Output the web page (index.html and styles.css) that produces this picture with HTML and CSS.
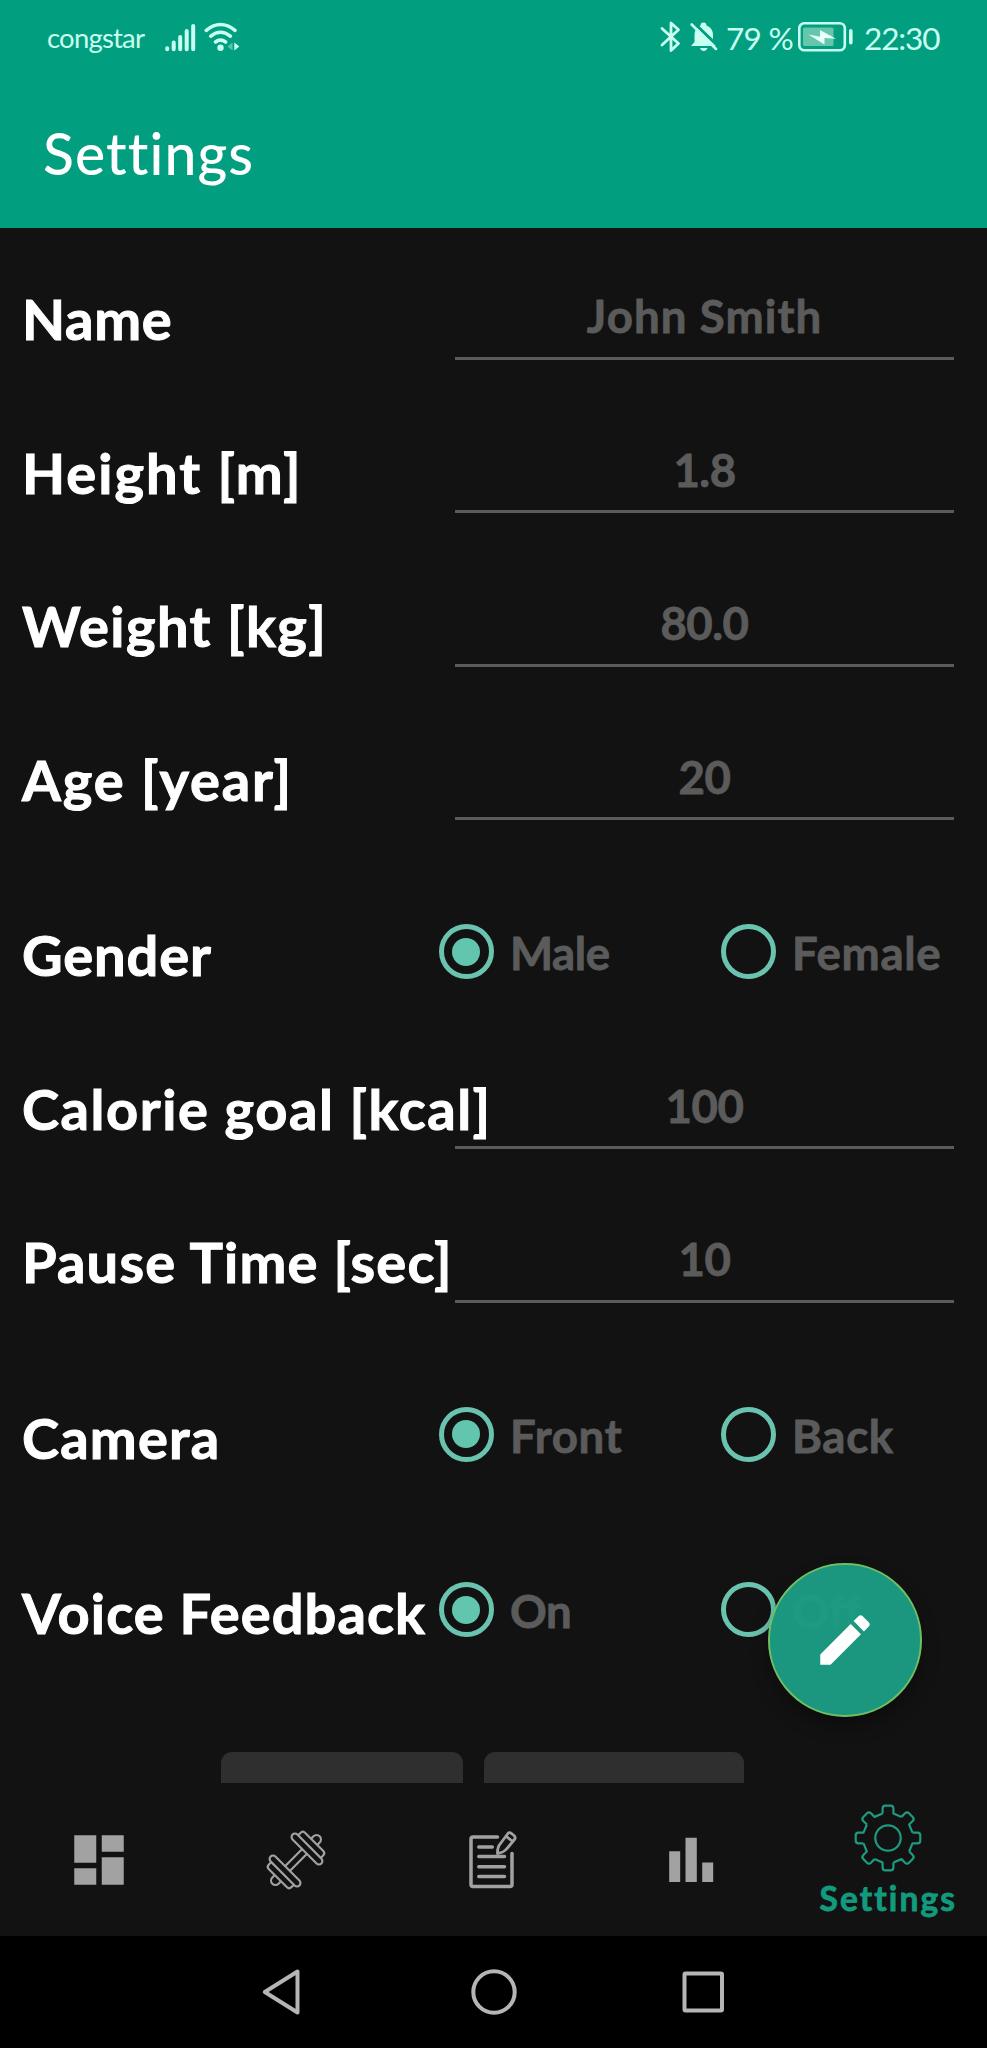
FILE: index.html
```html
<!DOCTYPE html>
<html lang="en">
<head>
<meta charset="utf-8">
<title>Settings</title>
<link rel="stylesheet" href="styles.css">
</head>
<body>
<div class="screen">
  <header class="header">
    <div class="status">
      <span class="carrier">congstar</span>
      <svg class="signal" width="31" height="29" viewBox="0 0 31 29" stroke="#c9fff0" stroke-width="4" stroke-linecap="round"><path d="M2.2 25.2v1M8.7 19.5v6.700M15.200 14v12.200M21.700 8v18.200M28.200 3v23.200"/></svg>
      <svg class="wifi" width="36" height="30" viewBox="0 0 36 30" fill="none" stroke="#c9fff0" stroke-width="3.600" stroke-linecap="round"><path d="M2.300 8.300Q16.500-3.300 31 8.300M6.800 14.200Q16.500 6.300 26.300 14.200M11.500 20Q16.500 16.300 21.600 20"/><circle cx="16.500" cy="25.700" r="3.200" fill="#c9fff0" stroke="none"/><path d="M28.500 20.500v8l-5-4z" fill="#5cc5a9" stroke="none"/><path d="M30.300 20.500v8l5-4z" fill="#c9fff0" stroke="none"/></svg>
      <span class="grow"></span>
      <svg class="bt" width="22" height="32" viewBox="0 0 22 32" fill="none" stroke="#c9fff0" stroke-width="2.800" stroke-linejoin="round" stroke-linecap="round"><path d="M2 7.500L18.500 22.500L11 29.500V2L18.500 8.700L2 24"/></svg>
      <svg class="bell" width="28" height="30" viewBox="0 0 28 30"><path d="M1 24L4.500 20V13Q4.500 6 10.500 3.500Q10.500.500 13.500.500Q16.500.500 16.500 3.500Q23 6 23 13V20L26 24Z" fill="#c9fff0"/><path d="M10 26h7.500q-1 3-3.700 3t-3.800-3z" fill="#c9fff0"/><path d="M3.500.5L28 24" stroke="#029e80" stroke-width="3"/><path d="M1.700 2.500L26 27" stroke="#c9fff0" stroke-width="2.600" stroke-linecap="round"/></svg>
      <span class="percent">79 %</span>
      <svg class="battery" width="56" height="30" viewBox="0 0 56 30"><rect x="1.300" y="1.300" width="45.500" height="27" rx="5" fill="none" stroke="#c9fff0" stroke-width="2.600"/><rect x="5" y="5.500" width="30.500" height="18.500" rx="1.500" fill="#66c6ac"/><path d="M10.500 12.500L22 14.800V8L38 16.800L26.500 16V22.500Z" fill="#e9fffa"/><rect x="51" y="7" width="3.600" height="15.500" rx="1.800" fill="#c9fff0"/></svg>
      <span class="clock">22:30</span>
    </div>
    <h1 class="title">Settings</h1>
  </header>

  <main class="form">
    <div class="row first"><span class="label name">Name</span><div class="field wide-text">John Smith</div></div>
    <div class="row"><span class="label height">Height [m]</span><div class="field">1.8</div></div>
    <div class="row"><span class="label weight">Weight [kg]</span><div class="field">80.0</div></div>
    <div class="row"><span class="label age">Age [year]</span><div class="field">20</div></div>
    <div class="row tall"><span class="label gender">Gender</span><div class="options"><div class="option"><i class="radio on"></i><span class="snug">Male</span></div><div class="option"><i class="radio"></i><span>Female</span></div></div></div>
    <div class="row"><span class="label calorie">Calorie goal [kcal]</span><div class="field">100</div></div>
    <div class="row"><span class="label pause">Pause Time [sec]</span><div class="field">10</div></div>
    <div class="row tall"><span class="label camera">Camera</span><div class="options"><div class="option"><i class="radio on"></i><span>Front</span></div><div class="option"><i class="radio"></i><span>Back</span></div></div></div>
    <div class="row tall"><span class="label voice">Voice Feedback</span><div class="options"><div class="option"><i class="radio on"></i><span class="snug">On</span></div><div class="option"><i class="radio"></i><span class="snug">Off</span></div></div></div>
    <div class="buttons"><div class="button save"></div><div class="button cancel"></div></div>
    <div class="fab"><svg width="66" height="66" viewBox="0 0 24 24" fill="#fff"><path d="M3 17.250V21h3.750L17.810 9.940l-3.750-3.750L3 17.250zM20.710 7.040c.390-.390.390-1.020 0-1.410l-2.340-2.340c-.390-.390-1.020-.390-1.410 0l-1.830 1.830 3.750 3.750 1.830-1.830z"/></svg></div>
  </main>

  <nav class="tabs">
    <div class="tab"><svg width="66" height="66" viewBox="0 0 24 24" fill="#a2a2a2"><path d="M3 13h8V3H3v10zm0 8h8v-6H3v6zm10 0h8V11h-8v10zm0-18v6h8V3h-8z"/></svg></div>
    <div class="tab"><svg width="66" height="66" viewBox="-34 -34 68 68" fill="none" stroke="#a2a2a2" stroke-width="2.200">
      <g transform="rotate(-45)">
        <path d="M-12.500-3.500h25M-12.500 3.500h25"/>
        <rect x="12.500" y="-21" width="7" height="42" rx="3.500"/>
        <path d="M19.500-16.500h3.500q3.500 0 3.500 3.500v26q0 3.500-3.500 3.500h-3.500"/>
        <path d="M26.500-4.500h3.500a4.500 4.500 0 0 1 0 9h-3.500"/>
        <rect x="-19.500" y="-21" width="7" height="42" rx="3.500"/>
        <path d="M-19.500-16.500h-3.500q-3.500 0-3.500 3.500v26q0 3.500 3.500 3.500h3.500"/>
        <path d="M-26.500-4.500h-3.500a4.500 4.500 0 0 0 0 9h3.500"/>
      </g></svg></div>
    <div class="tab"><svg width="66" height="66" viewBox="0 0 66 66" fill="none" stroke="#a2a2a2" stroke-width="3.500" stroke-linecap="round" stroke-linejoin="round"><path d="M37.500 10H13q-2 0-2 2v45.500q0 2 2 2h37q2 0 2-2V26.500M18.800 20h13.500M18.800 29.500h25.700M18.800 39.700h25.700M18.800 49.500h25.700"/><path stroke-width="2.800" d="M37.500 26.500Q37.300 20 40.500 16.500L47.500 7Q49 4.700 51.500 6.500L54 8.500Q56 10.300 54.500 12.500L47 21.500Q44 25.500 37.500 26.500ZM46.500 9.500L52 14"/></svg></div>
    <div class="tab"><svg width="66" height="66" viewBox="0 0 66 66" fill="#a2a2a2"><path d="M11.200 24.300h11v30.700h-11zM27.500 10.700h11.300V55H27.500zM44.200 35.500h11V55h-11z"/></svg></div>
    <div class="tab active"><svg width="70" height="70" viewBox="-35 -35 70 70" fill="none" stroke="#1f9a80" stroke-width="2.200" stroke-linejoin="round">
      <defs><path id="tooth" d="M-5.400-24.500V-29.500Q-5.400-32.300-2.600-32.300H2.600Q5.400-32.300 5.400-29.500V-24.500L13.500-21.100"/></defs>
      <use href="#tooth"/><use href="#tooth" transform="rotate(45)"/><use href="#tooth" transform="rotate(90)"/><use href="#tooth" transform="rotate(135)"/><use href="#tooth" transform="rotate(180)"/><use href="#tooth" transform="rotate(225)"/><use href="#tooth" transform="rotate(270)"/><use href="#tooth" transform="rotate(315)"/><circle r="12.700"/></svg><span>Settings</span></div>
  </nav>

  <div class="system">
    <svg width="48" height="56" viewBox="0 0 48 56"><path d="M37.500 7.500V48.500L4.800 28Z"/></svg>
    <svg width="48" height="56" viewBox="0 0 48 56"><circle cx="24" cy="28" r="20.700"/></svg>
    <svg width="48" height="56" viewBox="0 0 48 56"><rect x="4.500" y="9.500" width="37.500" height="37" rx="1"/></svg>
  </div>
</div>
</body>
</html>
```
FILE: styles.css
```css
* { box-sizing: border-box; }
body { margin: 0; background: #121212; font-family: Lato, "Open Sans", sans-serif; }
.screen { width: 987px; height: 2048px; display: flex; flex-direction: column; overflow: hidden; background: #121212; }

.header { height: 228px; flex: none; background: #029e80; color: #fff; }
.status { height: 76px; display: flex; align-items: flex-start; padding: 0 46px 0 47px; color: #c9fff0; white-space: nowrap; }
.carrier { width: 118px; font-size: 27.5px; line-height: 40px; letter-spacing: -0.8px; padding-top: 18px; }
.signal { margin-top: 23px; }
.wifi { margin: 22px 0 0 8px; }
.grow { flex: 1; }
.bt { margin-top: 21px; }
.bell { margin: 22px 0 0 8px; }
.percent { width: 72px; margin-left: 8px; font-size: 31.5px; line-height: 40px; letter-spacing: -0.7px; padding-top: 18px; }
.battery { margin-top: 22px; }
.clock { width: 77px; margin-left: 10px; font-size: 31.5px; line-height: 40px; letter-spacing: -1.1px; padding-top: 18px; }
.title { margin: 0; padding: 47px 0 0 43px; font-size: 57px; font-weight: 500; line-height: 60px; letter-spacing: 1.1px; }

.form { position: relative; height: 1554.5px; flex: none; overflow: hidden; }
.row { height: 153.5px; display: grid; grid-template-columns: 433px 499px; align-items: end; padding-left: 22px; }
.row.first { height: 149.5px; }
.row.tall { height: 175.5px; }
.label { color: #fff; font-size: 56px; font-weight: 700; line-height: 60px; margin-bottom: 28.5px; white-space: nowrap; -webkit-text-stroke: 1px #fff; z-index: 1; }
.name { letter-spacing: 0.7px; }
.height { letter-spacing: 2px; }
.weight { letter-spacing: 1.45px; }
.age { letter-spacing: 1.9px; }
.gender { letter-spacing: 0.9px; }
.calorie { letter-spacing: 1.55px; }
.pause { letter-spacing: 1.2px; }
.camera { letter-spacing: 1.2px; }
.voice { letter-spacing: 1.1px; }
.field { height: 69.5px; margin-bottom: 18px; padding-top: 1px; border-bottom: 3px solid #5b5b5b; color: #5b5b5b; font-size: 45.6px; font-weight: 700; line-height: 50px; text-align: center; letter-spacing: -0.5px; -webkit-text-stroke: 0.8px #5b5b5b; }
.wide-text { letter-spacing: 1.1px; }
.options { display: grid; grid-template-columns: 282px 282px; margin-left: -16.5px; }
.option { display: flex; align-items: flex-end; color: #5b5b5b; font-size: 45.6px; font-weight: 700; line-height: 50px; letter-spacing: 0.7px; -webkit-text-stroke: 0.8px #5b5b5b; }
.option span { margin: 0 0 35.2px 16.5px; }
.option .snug { letter-spacing: -0.4px; }
.radio { width: 55px; height: 55px; flex: none; margin-bottom: 34.5px; border: 5.5px solid #69c3ae; border-radius: 50%; display: flex; align-items: center; justify-content: center; }
.radio.on::after { content: ""; width: 28px; height: 28px; border-radius: 50%; background: #62c5ae; }
.buttons { display: flex; gap: 21.5px; margin: 80.5px 0 0 221px; }
.button { height: 90px; border-radius: 11px; background: #2f2f2f; }
.save { width: 241.5px; }
.cancel { width: 260px; }
.fab { position: absolute; left: 768px; top: 1335px; width: 153.5px; height: 153.5px; z-index: 2; border-radius: 50%; border: 2px solid #71bf62; background: rgba(27, 157, 131, 0.96); box-shadow: 0 10px 18px rgba(0, 0, 0, 0.3); display: flex; align-items: center; justify-content: center; }

.tabs { height: 153.5px; flex: none; display: grid; grid-template-columns: repeat(5, 1fr); }
.tab { display: flex; flex-direction: column; align-items: center; padding-top: 44.5px; }
.tab.active { padding-top: 20px; color: #129a7e; font-size: 33.5px; font-weight: 700; line-height: 40px; letter-spacing: 2.1px; -webkit-text-stroke: 0.8px #129a7e; }
.tab.active svg { -webkit-text-stroke: 0; }
.tab.active span { margin-top: 5px; }

.system { flex: 1; background: #000; display: flex; justify-content: center; gap: 162px; padding-top: 28px; }
.system svg { fill: none; stroke: #b5b5b5; stroke-width: 4; stroke-linejoin: round; }
```
